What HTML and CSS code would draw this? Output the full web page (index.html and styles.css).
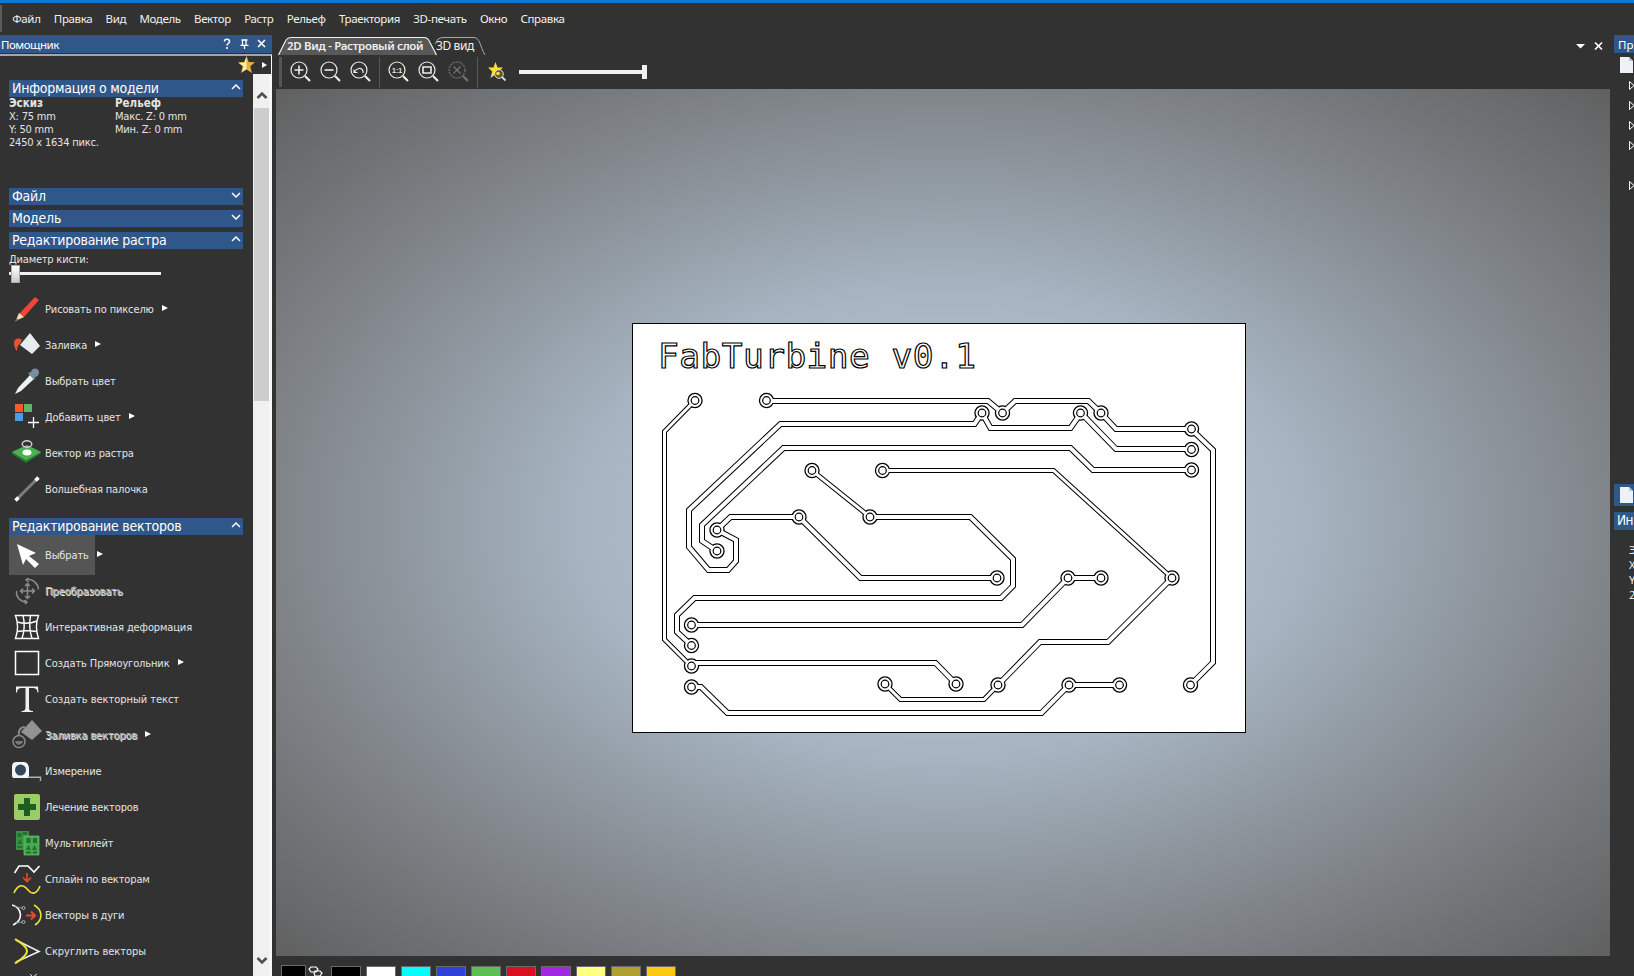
FILE: index.html
```html
<!DOCTYPE html>
<html lang="ru">
<head>
<meta charset="utf-8">
<title>2D Вид - Растровый слой</title>
<link rel="stylesheet" href="styles.css">
</head>
<body>
<nav class="menu"><i class="menu-grip"></i><span>Файл</span><span>Правка</span><span>Вид</span><span>Модель</span><span>Вектор</span><span>Растр</span><span>Рельеф</span><span>Траектория</span><span>3D-печать</span><span>Окно</span><span>Справка</span></nav>
<div class="main">
<aside class="side">
  <header class="side-head"><span>Помощник</span>
    <svg width="46" height="18" viewBox="0 0 46 18" fill="none" stroke="#fff" stroke-width="1.6"><path d="M2.500 6.500c0-3 5-3 5 0c0 2-2.500 2-2.500 4M5 12v2"/><path d="M19.500 5h6M20.500 5v5M24 5v5M18.500 10.300h8M22.500 10v4" stroke-width="1.300"/><path d="M36 5l7 7M43 5l-7 7"/></svg>
  </header>
  <div class="side-fav">
    <svg width="30" height="18" viewBox="0 0 30 18"><path d="M8.500 0l2.200 6 6.300.3-4.700 4 1.600 6.700-5.400-3.600L3 17l1.700-6.700L0 6.300 6.200 6z" fill="#e9b13f"/><path d="M8.500 1v12L4 16l1.500-5.500L1 7l5.500-.5z" fill="#fff0a8"/><path d="M24 6v6l5-3z" fill="#fff"/></svg>
  </div>
  <div class="side-body">
    <div class="content">
      <h2 class="bar">Информация о модели<svg class="chev"><path d="M1 6l4-4 4 4"/></svg></h2>
      <div class="info"><div><b>Эскиз</b><p>X: 75 mm</p><p>Y: 50 mm</p><p>2450 x 1634 пикс.</p></div><div><b>Рельеф</b><p>Макс. Z: 0 mm</p><p>Мин. Z: 0 mm</p></div></div>
      <h2 class="bar">Файл<svg class="chev"><path d="M1 2l4 4 4-4"/></svg></h2>
      <h2 class="bar">Модель<svg class="chev"><path d="M1 2l4 4 4-4"/></svg></h2>
      <h2 class="bar flush">Редактирование растра<svg class="chev"><path d="M1 6l4-4 4 4"/></svg></h2>
      <div class="brush"><p>Диаметр кисти:</p><div class="track"><i></i></div></div>
      <ul class="tools raster">
        <li><svg class="ic" viewBox="0 0 30 30"><path d="M7 20L23 3l4 3L12 23z" fill="#ef4638"/><path d="M7 19l5 4-8.500 4z" fill="#f3dfae"/><path d="M4.500 24l2 1.500-3.500 2z" fill="#707c6c"/></svg><span>Рисовать по пикселю</span><em></em></li>
        <li><svg class="ic" viewBox="0 0 30 30"><path d="M10 10c-4-3-8-1-8 3 0 3 1 5 2.500 8 1.500-3 0-5 3.500-7z" fill="#e35431"/><path d="M18 3l10 13-8 8-12-9z" fill="#e8eaf1"/></svg><span>Заливка</span><em></em></li>
        <li><svg class="ic" viewBox="0 0 30 30"><path d="M19 8l4 4L9 25l-6 3 3-6z" fill="#eef1f3"/><path d="M16 7l3-1c1-5 8-4 8 0 0 3-2 5-4 5l-1 3z" fill="#78909c"/></svg><span>Выбрать цвет</span></li>
        <li><svg class="ic" viewBox="0 0 30 30"><path d="M3 2h8v8H3z" fill="#ff5a2c"/><path d="M12 2h8v8h-8z" fill="#63b266"/><path d="M3 11h8v8H3z" fill="#469fe8"/><path d="M21.500 15v11M16 20.500h11" stroke="#fff" stroke-width="1.300"/></svg><span>Добавить цвет</span><em></em></li>
        <li><svg class="ic" viewBox="0 0 30 30"><path d="M0 14L15 7l14 7v1.500L14 25 0 16z" fill="#23762b"/><path d="M0 14L15 7l14 7-15 8.500z" fill="#4caf50"/><ellipse cx="15" cy="14.500" rx="4.500" ry="3" fill="#fff"/><ellipse cx="15" cy="6" rx="4.800" ry="3.200" fill="none" stroke="#ddcfe0" stroke-width="1.400"/></svg><span>Вектор из растра</span></li>
        <li><svg class="ic" viewBox="0 0 30 30"><path d="M4 26L26 4" stroke="#7d7d7d" stroke-width="3"/><path d="M3.500 26.500L6.500 23.500M23.500 6.500L26.500 3.500" stroke="#fff" stroke-width="3.600"/></svg><span>Волшебная палочка</span></li>
      </ul>
      <h2 class="bar flush">Редактирование векторов<svg class="chev"><path d="M1 6l4-4 4 4"/></svg></h2>
      <ul class="tools">
        <li class="sel"><svg class="ic" viewBox="0 0 30 30"><path d="M5 4l19 9-7 3 10 8-4 4-9-9-3 6z" fill="#fff"/></svg><span>Выбрать</span><em></em></li>
        <li class="off"><svg class="ic" viewBox="0 0 30 30" fill="none" stroke="#8c8c8c" stroke-width="1.500"><path d="M15.500 8v14M8.500 15h14M13 10l2.500-2.500L18 10M13 20l2.500 2.500L18 20M11 12.500L8.500 15l2.500 2.500M20 12.500l2.500 2.500-2.500 2.500M14 3.500c7-1 12 4 12.500 10M16.500 2l-2.500 2 3 2M15 26C9 26 4 22 4.500 15M12.500 24l2.500 2-2 2"/></svg><span>Преобразовать</span></li>
        <li><svg class="ic" viewBox="0 0 30 30" fill="none" stroke="#fff" stroke-width="1.400"><path d="M3.500 3.500h23c-3 8-3 14 0 23h-23c3-9 3-15 0-23zM11 3.500c2 8 2 14-1 23M18.500 3.500c-1.500 8-1 15 1.500 23M5 10c7 2 13 2 20-1M5 19.500c7-1 13-1 20 0"/></svg><span>Интерактивная деформация</span></li>
        <li><svg class="ic" viewBox="0 0 30 30"><path d="M3.500 3.500h23v23h-23z" fill="none" stroke="#fff" stroke-width="1.500"/></svg><span>Создать Прямоугольник</span><em></em></li>
        <li><svg class="ic" viewBox="0 0 30 30"><path d="M4 2.500h22l.5 6h-1C25 5 24 4 20 4h-3v19c0 3 .5 4 4 4v1H9.500v-1c3 0 4-1 4-4V4h-3C6.500 4 5.500 5 5 8.500H4z" fill="#f0f0f0"/></svg><span class="loose">Создать векторный текст</span></li>
        <li class="off"><svg class="ic" viewBox="0 0 30 30"><path d="M20 0l10 11-10 9-11-8z" fill="#929292"/><path d="M13 7c-5 0-7 4-6 9" fill="none" stroke="#8a8a8a" stroke-width="2"/><circle cx="7" cy="21.500" r="6" fill="none" stroke="#8a8a8a" stroke-width="1.500"/><path d="M3 21h8c-1 5-7 5-8 0z" fill="#777"/></svg><span>Заливка векторов</span><em></em></li>
        <li><svg class="ic" viewBox="0 0 30 30"><path d="M4 6h8c3 0 5 3 5 7v9H2c-2 0-2-2-2-3v-8c0-3 1-5 4-5z" fill="#f1f5f8"/><circle cx="8.500" cy="14" r="5.500" fill="#34475a"/><path d="M16 21.200h12.500V25" fill="none" stroke="#a5b2ba" stroke-width="1.400"/></svg><span>Измерение</span></li>
        <li><svg class="ic" viewBox="0 0 30 30"><rect x="2" y="2" width="26" height="26" rx="2" fill="#9ccc65"/><path d="M12 6h6v6h6v6h-6v6h-6v-6H6v-6h6z" fill="#1b5e20"/></svg><span>Лечение векторов</span></li>
        <li><svg class="ic" viewBox="0 0 30 30"><path d="M4 3h13v19H4z" fill="#389344"/><path d="M12 8h15v19H12z" fill="#45ad50" stroke="#65c16c" stroke-width=".7"/><g fill="#256f31"><path d="M5.500 5h4v4h-4zM11 4h4v3h-4zM5.500 16l2.500-5 2.500 5zM5.500 18h5v2h-5zM14.500 10h4v5h-4zM21 10h4v5h-4zM14 22l2.500-5 2.500 5zM20 22l2.500-5 2.500 5zM14 23.500h5v2h-5zM21 23.500h4v2h-4z"/></g></svg><span>Мультиплейт</span></li>
        <li><svg class="ic" viewBox="0 0 30 30" fill="none" stroke-width="1.600"><path d="M2.500 9l4.500-7h9l6 6 5.500-6" stroke="#fff"/><path d="M15 9v8M11 13.500l4 4 4-4" stroke="#e2502e"/><path d="M2 29c4-9 9-9 14-3 4 5 9 4 12-4" stroke="#ece22f"/></svg><span>Сплайн по векторам</span></li>
        <li><svg class="ic" viewBox="0 0 30 30" fill="none" stroke-width="1.600"><path d="M0 5c10 3 12 15 1 20" stroke="#fff"/><path d="M3 6.500l7 1.500M4 23l6-1" stroke="#8d969c" stroke-width="1"/><circle cx="11.500" cy="8" r="1.500" stroke="#aab4ba" stroke-width="1"/><circle cx="11.500" cy="22" r="1.500" stroke="#aab4ba" stroke-width="1"/><path d="M14 15.500h8M19 11.500l4 4-4 4" stroke="#e2502e" stroke-width="2"/><path d="M22 5c9 5 9 15 1 20" stroke="#ece22f"/></svg><span>Векторы в дуги</span></li>
        <li><svg class="ic" viewBox="0 0 30 30" fill="none" stroke-width="1.600"><path d="M4 4l23 11.500L4 26" stroke="#eee"/><path d="M3 3c5 3 12 7 12 12S8 24 3 27.500" stroke="#ece22f" stroke-width="2"/></svg><span class="loose">Скруглить векторы</span></li>
        <li><svg class="ic" viewBox="0 0 30 30" fill="none" stroke="#ddd"><path d="M18 2l3 3 4-3"/></svg></li>
      </ul>
    </div>
    <div class="scroll"><svg width="16" height="34"><path d="M3.500 24l4.500-4.500 4.500 4.500" fill="none" stroke="#505050" stroke-width="2.600"/></svg><i></i><svg class="down" width="16" height="30"><path d="M3.500 12l4.500 4.500 4.500-4.500" fill="none" stroke="#505050" stroke-width="2.600"/></svg></div>
  </div>
</aside>
<section class="view">
  <div class="tabs">
    <svg class="tab-shape" width="220" height="21" viewBox="0 0 220 21"><path d="M158 9l3-5 4-1.500h32c6 0 6 9 11 17.500" fill="none" stroke="#a9a9a9"/><path d="M1.500 20L8.500 6q1.500-3.500 6-3.500H147q4 0 6 5l6.500 12.500" fill="#585858" stroke="#eee" stroke-width="1.200"/></svg>
    <b>2D Вид - Растровый слой</b><span>3D вид</span>
    <svg class="tab-ctl" width="30" height="12"><path d="M0 3h9L4.500 7.500z" fill="#fff"/><path d="M19 1.500l7 7M26 1.500l-7 7" stroke="#fff" stroke-width="1.700"/></svg>
  </div>
  <div class="toolbar">
    <i class="grip"></i>
    <svg class="zm" viewBox="0 0 22 22"><circle cx="9" cy="9" r="8"/><path class="h" d="M15 15l5 5"/><path d="M4.500 9h9M9 4.500v9" stroke-width="1.600"/></svg>
    <svg class="zm" viewBox="0 0 22 22"><circle cx="9" cy="9" r="8"/><path class="h" d="M15 15l5 5"/><path d="M4.500 9h9" stroke-width="1.600"/></svg>
    <svg class="zm" viewBox="0 0 22 22"><circle cx="9" cy="9" r="8"/><path class="h" d="M15 15l5 5"/><path d="M4 8.500v3h3.500M4.500 11c2-4 7-5 8.500-1v2"/></svg>
    <i class="sep"></i>
    <svg class="zm" viewBox="0 0 22 22"><circle cx="9" cy="9" r="8"/><path class="h" d="M15 15l5 5"/><text x="4" y="12">1:1</text></svg>
    <svg class="zm" viewBox="0 0 22 22"><circle cx="9" cy="9" r="8"/><path class="h" d="M15 15l5 5"/><path d="M5 6h8v6H5z" stroke-width="1.600"/></svg>
    <svg class="zm dim" viewBox="0 0 22 22"><circle cx="9" cy="9" r="8" stroke-dasharray="2 1"/><path class="h" d="M15 15l5 5"/><path d="M5.500 5.500l7 7M12.500 5.500l-7 7"/></svg>
    <i class="sep s2"></i>
    <svg class="zstar" width="18" height="20" viewBox="0 0 18 20"><path d="M7.500 0l2 5.500h5.500l-4.200 4 1.700 6.500-5-3.500-5 3.500 1.700-6.500L0 5.500h5.500z" fill="#ffdf35"/><circle cx="11" cy="12" r="4.300" fill="#5c562f" stroke="#ddd"/><path d="M14 15l3.500 3.500" stroke="#ddd" stroke-width="1.800"/><circle cx="10" cy="11.500" r="1.800" fill="#ffdf35"/></svg>
    <div class="zslide"><i></i></div>
  </div>
  <div class="canvas">
    <svg class="board" width="614" height="411" viewBox="632 323 614 411">
      <defs>
        <g id="wide" fill="none">
          <path d="M766 401H988L1002.500 413 1015 401H1088.500L1101 413 1116 429H1191L1213 450V662.500L1190.500 685"/>
          <path d="M717 530L736 540V561L728 570H708.500L689 547V510L780.500 424H974.500L982 413 990.500 428H1070.500L1081 413 1116 449H1191"/>
          <path d="M717 551L702 541V525L783.500 448H1070.500L1093 470H1191"/>
          <path d="M717 530L730.500 517H799L860.500 578H997"/>
          <path d="M870 517H970.500L1013 559V586L1001 598H694.500L677 615V632L691 645"/>
          <path d="M691 625H1022L1068 578H1101"/>
          <path d="M691 663H935.500L956 684"/>
          <path d="M691 687H701L727.500 713H1041.500L1069 685H1119.500"/>
          <path d="M1172 578L1108 642H1040L998 685"/>
        </g>
        <g id="thin" fill="none">
          <path d="M695 400.500L664.500 431.500V639.500L691 666"/>
          <path d="M812 470.500L870 517"/>
          <path d="M883 470.500H1053.500L1172 578"/>
          <path d="M998 685L984 699.500H900.500L885 684"/>
        </g>
        <path id="pads" fill="none" stroke-linecap="round" d="M695 400.500h0M766.500 400.500h0M812 470.500h0M882.500 470.500h0M799 517h0M870 517h0M717 530h0M717 551h0M982 413h0M1002.500 413h0M1080.500 413h0M1101 413h0M1191.500 429h0M1191.500 449.500h0M1191.500 470h0M997 578h0M1068 578h0M1101 578h0M1172 578h0M691.500 625h0M691.500 645.500h0M691.500 666h0M691.500 687h0M885 684h0M956 684h0M998 685h0M1069 685h0M1119.500 685h0M1190.500 685h0"/>
      </defs>
      <rect x="632.500" y="323.500" width="613" height="409" fill="#fff" stroke="#000"/>
      <g stroke="#000"><use href="#wide" stroke-width="6"/><use href="#thin" stroke-width="5"/><use href="#pads" stroke-width="15.400"/></g>
      <g stroke="#fff"><use href="#wide" stroke-width="4"/><use href="#thin" stroke-width="3"/><use href="#pads" stroke-width="12.800"/></g>
      <use href="#pads" stroke="#000" stroke-width="8.800"/>
      <use href="#pads" stroke="#fff" stroke-width="6.400"/>
      <text class="silk" x="658" y="367.500" textLength="318">FabTurbine v0.1</text>
    </svg>
  </div>
  <div class="palette">
    <i class="cur"></i><svg width="27" height="11"><path d="M5 2h5l2 2-2 3H5L3 4zM9 6h5l2 2-2 3H9L8 8z" fill="none" stroke="#fff" stroke-width="1.200"/></svg>
    <i class="k"></i><i class="w"></i><i class="c"></i><i class="b"></i><i class="g"></i><i class="r"></i><i class="p"></i><i class="y"></i><i class="o"></i><i class="a"></i>
  </div>
</section>
<aside class="right">
  <div class="r-head">Пр</div>
  <div class="r-doc"><svg width="13" height="16"><path d="M0 0h9l4 4v12H0z" fill="#eef1f6"/><path d="M9 0v4h4z" fill="#b8c4d0"/></svg></div>
  <div class="r-tree">
    <svg width="6" height="120" fill="none" stroke="#fff"><path d="M.5 4.500v8l4.500-4zM.5 24.500v8l4.500-4zM.5 44.500v8l4.500-4zM.5 64.500v8l4.500-4zM.5 104.500v8l4.500-4z"/></svg>
  </div>
  <div class="r-doc blue"><svg width="13" height="16"><path d="M0 0h9l4 4v12H0z" fill="#eef1f6"/><path d="M9 0v4h4z" fill="#b8c4d0"/></svg></div>
  <div class="r-info">Ин</div>
  <div class="r-vals"><p>Э</p><p>X</p><p>Y</p><p>2</p></div>
</aside>
</div>
</body>
</html>
```
FILE: styles.css
```css
* { box-sizing: border-box; }
body {
  margin: 0; width: 1634px; height: 976px; overflow: hidden;
  display: flex; flex-direction: column;
  background: #323232; color: #f0f0f0; border-top: 3px solid #0a78d7;
  font: 12px "Noto Sans", "Open Sans", sans-serif;
}
h2, p, ul { margin: 0; padding: 0; font-weight: normal; }
i, em { display: block; font-style: normal; }
svg { display: block; flex: none; }

.menu { height: 32px; flex: none; display: flex; align-items: center; gap: 13.300px; white-space: nowrap; padding-bottom: 1px; }
.menu span { font-size: 11.500px; letter-spacing: -.36px; }
.menu-grip { width: 2px; height: 27px; background: #5a5a5a; margin-right: -3px; }
.main { flex: 1; min-height: 0; display: flex; }

/* Assistant panel */
.side { width: 272px; flex: none; display: flex; flex-direction: column; font-family: "DejaVu Sans Condensed", "Noto Sans", sans-serif; font-size: 11px; color: #e4e4e4; }
.side-head { height: 18px; flex: none; background: #30578a; display: flex; justify-content: space-between; align-items: center; padding: 0 4px 0 1px; font: 11.500px "Noto Sans", sans-serif; letter-spacing: -.45px; color: #fff; }
.side-fav { height: 20px; flex: none; border-top: 2px solid #a5a5a5; margin-top: 1px; border-right: 1px solid #fff; display: flex; justify-content: flex-end; padding: 0 3px 0 0; }
.side-body { flex: 1; min-height: 0; display: flex; overflow: hidden; }
.content { width: 253px; padding: 6px 10px 0 9px; overflow: hidden; flex: none; }
.bar { height: 17px; line-height: 17px; font-size: 14px; letter-spacing: -.24px; padding: 0 2px 0 3px; background: #30578a; color: #fff; display: flex; justify-content: space-between; margin-bottom: 5px; white-space: nowrap; }
.bar.flush { margin-bottom: 0; }
.chev { width: 10px; height: 8px; margin: 3px 0; fill: none; stroke: #fff; stroke-width: 1.500; }
.info { display: flex; height: 91px; line-height: 13px; white-space: nowrap; margin-top: -5px; letter-spacing: -.2px; }
.info > div:first-child { width: 106px; }
.info b { display: block; font-size: 11.500px; letter-spacing: 0; }
.brush { height: 42px; padding-top: 4px; letter-spacing: -.2px; }
.track { width: 152px; height: 3px; margin-top: 6px; background: #f0f0f0; }
.track i { width: 9px; height: 18px; background: linear-gradient(#fff, #ccc); border: 1px solid #aaa; position: relative; left: 2px; top: -7px; }
.tools { list-style: none; }
.tools.raster { height: 227px; }
.tools li { height: 36px; display: flex; align-items: center; padding-left: 3px; white-space: nowrap; }
.ic { width: 30px; height: 30px; }
.tools span { margin-left: 3px; letter-spacing: -.13px; }
.tools span.loose { letter-spacing: -.03px; }
.tools em { border-left: 6px solid #fff; border-top: 3px solid transparent; border-bottom: 3px solid transparent; margin-left: 8px; margin-top: -3px; }
.tools li.sel { height: 40px; width: 86px; background: #555; margin-bottom: -2px; }
.tools .off span { color: #b5b5b5; text-shadow: 1px 1px 0 #eee; }
.scroll { width: 19px; background: #f0f0f0; border-right: 3px solid #f8f8f8; padding-left: 1px; display: flex; flex-direction: column; flex: none; }
.scroll i { height: 293px; flex: none; background: #cdcdcd; }
.scroll .down { margin-top: auto; }

/* Work area */
.view { width: 1338px; flex: none; padding-left: 4px; display: flex; flex-direction: column; }
.tabs { height: 20px; flex: none; display: flex; align-items: center; padding-left: 11px; position: relative; white-space: nowrap; }
.tabs b, .tabs span { position: relative; font-size: 12px; width: 149px; }
.tabs b { font-size: 11.500px; font-weight: 600; letter-spacing: -.3px; }
.tabs span { letter-spacing: -.4px; }
.tab-shape { position: absolute; left: 1px; top: 0; }
.tab-ctl { margin-left: auto; margin-right: 4px; margin-top: 3px; }
.toolbar { height: 34px; flex: none; display: flex; padding-left: 3px; position: relative; }
.grip { width: 3px; height: 30px; background: #555; margin: 2px 8px 0 0; }
.zm { width: 22px; height: 22px; margin: 6px 8px 0 0; fill: none; stroke: #ececec; stroke-width: 1.200; }
.zm .h { stroke-width: 2.200; }
.zm text { font: 700 7px "Liberation Sans", sans-serif; fill: #eee; stroke: none; }
.zm.dim { opacity: .35; }
.sep { width: 1px; height: 31px; background: #5a5a5a; margin: 2px 8px 0 -1px; }
.sep.s2 { margin-right: 10px; }
.zstar { margin-top: 7px; }
.zslide { width: 128px; height: 4px; background: #f0f0f0; margin: 15px 0 0 13px; }
.zslide i { width: 5px; height: 14px; background: #f0f0f0; margin: -5px 0 0 123px; }
.canvas { height: 867px; flex: none; padding: 234px 0 0 356px; background: radial-gradient(farthest-corner at 50% 50%, #b5c3d2 0, #b0becc 26%, #a6b3c0 39%, #99a4ae 49%, #82878c 69%, #75797c 80%, #606060 100%); }
.silk { font: 34.500px "DejaVu Sans Mono", monospace; fill: #fff; stroke: #000; stroke-width: 1.200; }
.palette { height: 20px; display: flex; padding: 9px 0 0 5px; }
.palette i { width: 30px; height: 20px; flex: none; border: 1px solid #6a6a6a; margin: 1px 5px 0 0; }
.palette i.cur { width: 25px; margin: 0; }
.palette svg { margin-right: -2px; }
.k, .cur { background: #000; }
.w { background: #fff; }
.c { background: #0ff; }
.b { background: #3040d8; }
.g { background: #5cbf50; }
.r { background: #d81020; }
.p { background: #a028e0; }
.y { background: #ffff80; }
.o { background: #b0a030; }
.a { background: #ffc810; }

/* Project panel */
.right { flex: 1; min-width: 0; overflow: hidden; padding-left: 4px; }
.r-head, .r-info { height: 18px; line-height: 19px; background: #30578a; padding-left: 4px; font-size: 11.500px; color: #fff; }
.r-doc { height: 24px; padding: 4px 0 0 6px; }
.r-tree { height: 407px; padding-left: 15px; }
.r-doc.blue { height: 22px; background: #30578a; padding-top: 3px; }
.r-info { margin-top: 6px; font: 13.500px/17px "DejaVu Sans Condensed", sans-serif; padding-left: 3px; letter-spacing: -.5px; white-space: nowrap; }
.r-vals { padding: 12px 0 0 15px; line-height: 15px; font-size: 11px; }
```
